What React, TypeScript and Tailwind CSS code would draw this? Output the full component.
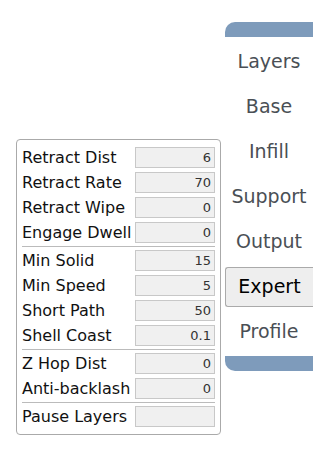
type Row = { label: string; value: string };

const groups: Row[][] = [
  [
    { label: "Retract Dist", value: "6" },
    { label: "Retract Rate", value: "70" },
    { label: "Retract Wipe", value: "0" },
    { label: "Engage Dwell", value: "0" },
  ],
  [
    { label: "Min Solid", value: "15" },
    { label: "Min Speed", value: "5" },
    { label: "Short Path", value: "50" },
    { label: "Shell Coast", value: "0.1" },
  ],
  [
    { label: "Z Hop Dist", value: "0" },
    { label: "Anti-backlash", value: "0" },
  ],
  [{ label: "Pause Layers", value: "" }],
];

const tabs = ["Layers", "Base", "Infill", "Support", "Output", "Expert", "Profile"];

function Field({ label, value }: Row) {
  return (
    <div className="flex h-[25px] items-center justify-between">
      <span className="text-[16px] text-[#111]">{label}</span>
      <div className="flex h-[21px] w-[80px] items-center justify-end border border-[#c8c8c8] bg-[#f0f0f0] pr-[3px] text-[13px] text-[#333]">
        {value}
      </div>
    </div>
  );
}

export default function App() {
  return (
    <div
      className="flex h-[454px] w-[313px] items-start bg-white"
      style={{ fontFamily: '"DejaVu Sans", sans-serif' }}
    >
      <div className="ml-[16px] mt-[139px] w-[205px] rounded-[4px] border border-[#aaa] px-[5px] py-[5px]">
        {groups.map((g, i) => (
          <div key={i}>
            {i > 0 && <div className="my-px border-t border-[#bbb]" />}
            {g.map((r) => (
              <Field key={r.label} {...r} />
            ))}
          </div>
        ))}
      </div>

      <nav className="ml-auto mt-[22px] flex w-[88px] flex-col">
        <div className="mb-[2px] h-[15px] rounded-tl-[10px] bg-[#7e9bbb]" />
        {tabs.map((t) =>
          t === "Expert" ? (
            <div key={t} className="flex h-[45px] items-center">
              <div className="flex h-[40px] w-full items-center justify-center rounded-l-[3px] border border-r-0 border-[#aaa] bg-[#eee] text-[19px] text-black">
                {t}
              </div>
            </div>
          ) : (
            <div
              key={t}
              className="flex h-[45px] items-center justify-center text-[19px] text-[#4a4f55]"
            >
              {t}
            </div>
          ),
        )}
        <div className="mt-[2px] h-[15px] rounded-bl-[10px] bg-[#7e9bbb]" />
      </nav>
    </div>
  );
}
